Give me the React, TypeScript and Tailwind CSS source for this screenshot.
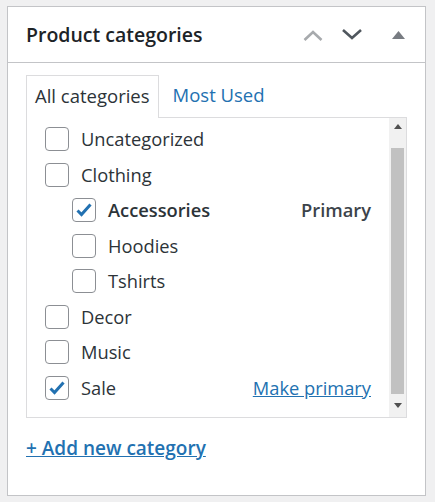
import React from "react";

type Cat = { name: string; checked?: boolean; child?: boolean; bold?: boolean; note?: "primary" | "make" };

const cats: Cat[] = [
  { name: "Uncategorized" },
  { name: "Clothing" },
  { name: "Accessories", checked: true, child: true, bold: true, note: "primary" },
  { name: "Hoodies", child: true },
  { name: "Tshirts", child: true },
  { name: "Decor" },
  { name: "Music" },
  { name: "Sale", checked: true, note: "make" },
];

function Box({ checked }: { checked?: boolean }) {
  return (
    <span className="flex h-[24px] w-[24px] shrink-0 items-center justify-center rounded-[4px] border border-[#8c8f94] bg-white">
      {checked && (
        <svg width="20" height="20" viewBox="0 0 20 20">
          <path d="M3.5 10.5l4 4 9-10" fill="none" stroke="#2271b1" strokeWidth="3" />
        </svg>
      )}
    </span>
  );
}

export default function App() {
  return (
    <div className="min-h-[502px] bg-[#f0f0f1] pl-[7px] pr-[9px] pt-[6px] pb-[6px]" style={{ fontFamily: '"Open Sans", sans-serif' }}>
      <div className="h-[490px] border border-[#c3c4c7] bg-white">
        <div className="flex h-[56px] items-center border-b border-[#c3c4c7] pl-[18px] pr-[20px]">
          <h2 className="flex-1 text-[19.5px] font-semibold text-[#1d2327]">Product categories</h2>
          <div className="flex items-center">
            <svg width="20" height="12" viewBox="0 0 20 12" className="mr-[18px]">
              <path d="M1.5 11l8.5-8 8.5 8" fill="none" stroke="#a7aaad" strokeWidth="2.6" />
            </svg>
            <svg width="22" height="12" viewBox="0 0 22 12" className="mr-[29px]">
              <path d="M2 1l9 8 9-8" fill="none" stroke="#50575e" strokeWidth="2.6" />
            </svg>
            <svg width="13" height="8" viewBox="0 0 13 8">
              <path d="M0 8L6.5 0 13 8z" fill="#787c82" />
            </svg>
          </div>
        </div>
        <div className="pl-[18px] pr-[18px] pt-[12px]">
          <div className="flex items-end">
            <div className="relative z-10 -mb-px flex h-[43px] items-center border border-b-0 border-[#dcdcde] bg-white px-[8px] pb-[3px] text-[18.5px] text-[#2c3338]">
              All categories
            </div>
            <div className="ml-[14px] flex h-[42px] items-center pb-[3px] text-[18.5px] text-[#2271b1]">Most Used</div>
          </div>
          <div className="flex h-[301px] border border-[#dcdcde]">
            <div className="flex-1 pt-[9px] pl-[18px] pr-[18px]">
              {cats.map((c) => (
                <div key={c.name} className={`flex h-[35.5px] items-start ${c.child ? "pl-[27px]" : ""}`}>
                  <Box checked={c.checked} />
                  <span className={`ml-[12px] flex-1 text-[18.3px] leading-[24px] text-[#2c3338] ${c.bold ? "font-semibold" : ""}`}>{c.name}</span>
                  {c.note === "primary" && <span className="text-[18.3px] font-semibold leading-[24px] text-[#3c434a]">Primary</span>}
                  {c.note === "make" && <span className="text-[18.3px] leading-[24px] text-[#2271b1] underline">Make primary</span>}
                </div>
              ))}
            </div>
            <div className="flex w-[17px] flex-col bg-[#f1f1f1]">
              <div className="flex h-[17px] items-center justify-center">
                <svg width="8" height="5" viewBox="0 0 8 5"><path d="M0 5L4 0 8 5z" fill="#505050" /></svg>
              </div>
              <div className="mx-[2px] mt-[13px] h-[246px] bg-[#c1c1c1]" />
              <div className="flex flex-1 items-center justify-center">
                <svg width="8" height="5" viewBox="0 0 8 5"><path d="M0 0L4 5 8 0z" fill="#505050" /></svg>
              </div>
            </div>
          </div>
          <div className="mt-[16px] text-[19px] font-semibold text-[#2271b1] underline">+ Add new category</div>
        </div>
      </div>
    </div>
  );
}
